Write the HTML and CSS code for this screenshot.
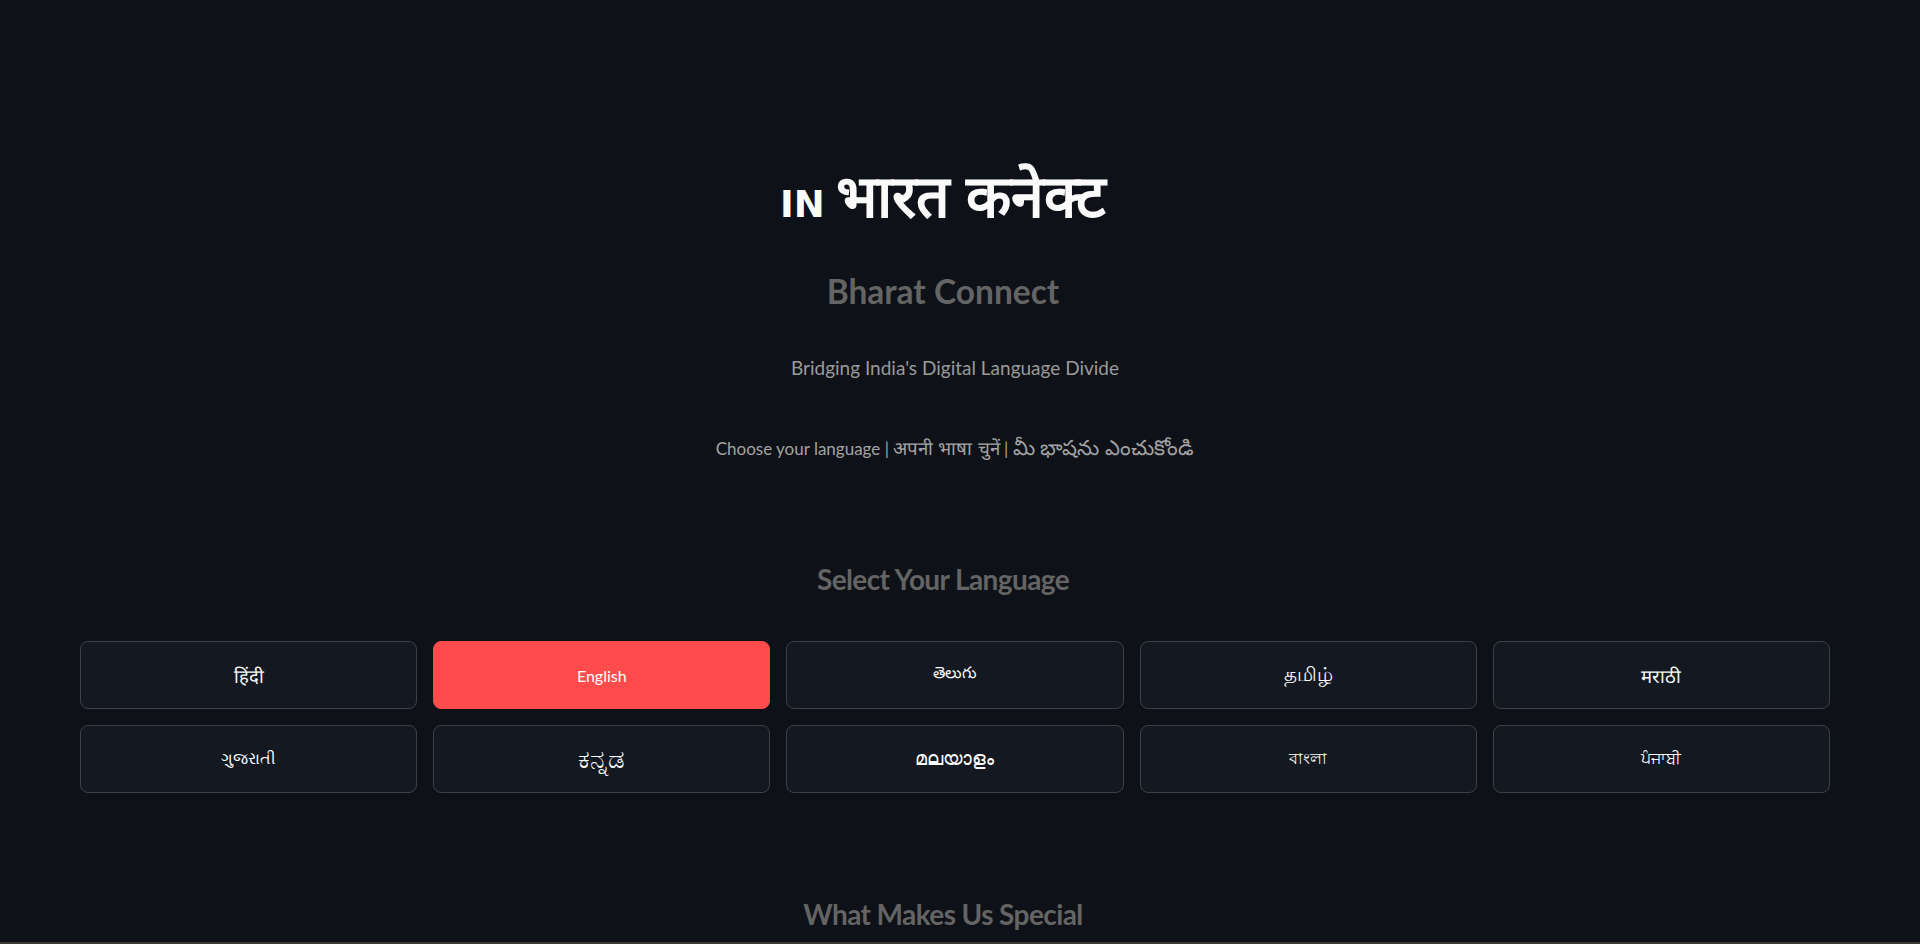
FILE: index.html
```html
<!DOCTYPE html>
<html lang="en">
<head>
<meta charset="utf-8">
<title>Bharat Connect</title>
<link rel="stylesheet" href="styles.css">
</head>
<body>
<main class="app">
  <h1 class="title"><span class="flag">IN</span> <span class="indic title-deva">भारत कनेक्ट</span></h1>
  <h2 class="subtitle">Bharat Connect</h2>
  <p class="tagline">Bridging India's Digital Language Divide</p>
  <p class="choose">Choose your language | <span class="indic choose-deva">अपनी भाषा चुनें</span> | <span class="indic choose-telu">మీ భాషను ఎంచుకోండి</span></p>
  <h3 class="section-title">Select Your Language</h3>
  <div class="lang-grid">
    <button class="lang-btn indic deva">हिंदी</button>
    <button class="lang-btn active">English</button>
    <button class="lang-btn indic">తెలుగు</button>
    <button class="lang-btn indic taml">தமிழ்</button>
    <button class="lang-btn indic deva">मराठी</button>
    <button class="lang-btn indic">ગુજરાતી</button>
    <button class="lang-btn indic knda">ಕನ್ನಡ</button>
    <button class="lang-btn indic mlym">മലയാളം</button>
    <button class="lang-btn indic">বাংলা</button>
    <button class="lang-btn indic">ਪੰਜਾਬੀ</button>
  </div>
  <h3 class="section-title special">What Makes Us Special</h3>
  <div class="bottom-rule"></div>
</main>
</body>
</html>
```
FILE: styles.css
```css
html, body {
  margin: 0;
  padding: 0;
  height: 944px;
  overflow: hidden;
  background: #0e1117;
}
body {
  font-family: Lato, "Noto Sans", sans-serif;
  color: #fafafa;
}
.indic {
  font-family: sans-serif;
}
.app {
  padding: 171px 90px 0 80px;
  display: flex;
  flex-direction: column;
  align-items: stretch;
  text-align: center;
}
.title {
  margin: 0;
  height: 52px;
  font-size: 44px;
  line-height: 52px;
  font-weight: 700;
  color: #fafafa;
  padding-right: 24px;
}
.flag {
  font-family: "DejaVu Sans", sans-serif;
  font-size: 37px;
  font-weight: 700;
}
.title-deva {
  font-size: 59px;
}
.subtitle {
  margin: 46px 0 0;
  font-size: 33.5px;
  line-height: 44px;
  font-weight: 700;
  color: #646464;
  padding-right: 24px;
}
.tagline {
  margin: 41px 0 0;
  font-size: 19px;
  line-height: 28px;
  color: #9a9a9a;
}
.choose {
  margin: 52px 0 0;
  font-size: 17px;
  line-height: 28px;
  color: #a3a3a3;
}
.choose-deva {
  font-size: 18.7px;
}
.choose-telu {
  font-size: 21px;
}
.section-title {
  margin: 98px 0 0;
  font-size: 28px;
  line-height: 36px;
  font-weight: 700;
  letter-spacing: -0.6px;
  color: #646464;
  padding-right: 24px;
}
.lang-grid {
  margin-top: 44px;
  display: grid;
  grid-template-columns: repeat(5, 1fr);
  gap: 16px;
}
.lang-btn {
  height: 68px;
  border: 1px solid #3d4048;
  border-radius: 8px;
  background: #141820;
  color: #fafafa;
  font-size: 16px;
  cursor: pointer;
}
.lang-btn.deva {
  font-size: 18.5px;
}
.lang-btn.taml {
  font-size: 19.5px;
}
.lang-btn.knda {
  font-size: 26px;
}
.lang-btn.mlym {
  font-size: 19px;
}
.lang-btn.active {
  font-family: Lato, "Noto Sans", sans-serif;
  background: #ff4b4b;
  border-color: #ff4b4b;
  color: #ffffff;
}
.section-title.special {
  margin-top: 103px;
}
.bottom-rule {
  margin: 10px -90px 0 -80px;
  height: 2px;
  background: #3a3a32;
}
```
